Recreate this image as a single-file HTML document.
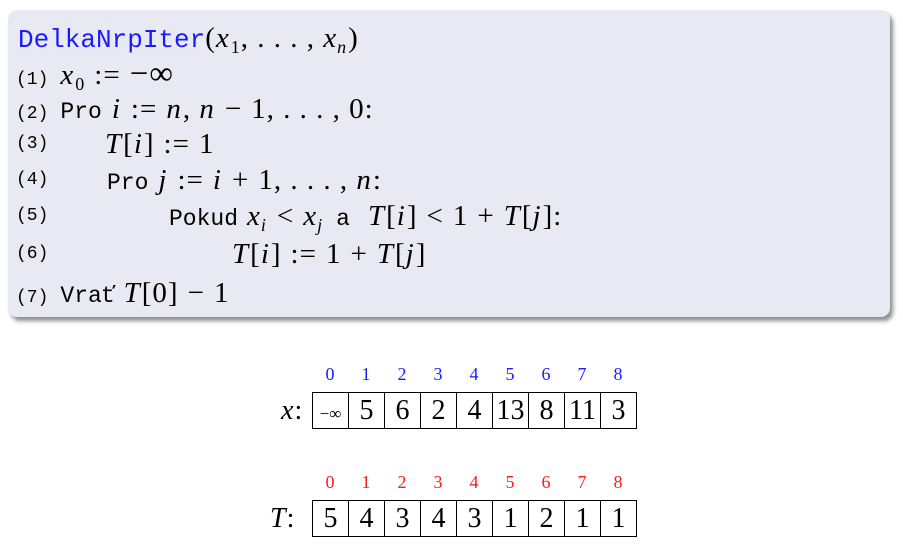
<!DOCTYPE html>
<html><head><meta charset="utf-8"><style>
body{margin:0;width:903px;height:550px;background:#fff;position:relative;overflow:hidden;font-family:"Liberation Serif",serif}
.box{position:absolute;left:8px;top:10px;width:882px;height:307px;background:#e9e9f4;border-radius:9px;box-shadow:3px 4px 4px rgba(0,0,0,0.45)}
.l{position:absolute;white-space:nowrap;height:36px;line-height:36px}
.n{font-family:"Liberation Mono",monospace;font-size:18px}
.m{font-family:"Liberation Mono",monospace;font-size:23px}
.s{font-family:"Liberation Serif",serif;font-size:29px;letter-spacing:1px}
.o{padding:0 9px}
.g{display:inline-block;width:10px}
i{font-style:italic;padding-right:1px}
sub{font-size:18px;vertical-align:-6px;line-height:0;font-style:normal}
i sub{font-style:italic}
.cell{position:absolute;width:37px;height:37px;border:1px solid #000;box-sizing:border-box;text-align:center;line-height:35px;font-size:28px}
.idx{position:absolute;width:36px;text-align:center;font-size:18px}
</style></head><body>
<div class="box"></div>
<div class="l" style="left:18px;top:20px"><span class="m" style="font-size:26px;color:#1a1aff">DelkaNrpIter</span><span class="s" style="letter-spacing:1px">(<i>x</i><sub>1</sub>, . . . , <i>x<sub>n</sub></i>)</span></div>
<div class="l" style="left:16px;top:56px"><span class="n">(1)</span><span class="g" style="width:12px"></span><span class="s"><i>x</i><sub>0</sub><span class="o">:=</span><span style="font-size:33px">−∞</span></span></div>
<div class="l" style="left:16px;top:91px"><span class="n">(2)</span><span class="g" style="width:12px"></span><span class="m">Pro</span><span class="g"></span><span class="s"><i>i</i><span class="o">:=</span><i>n</i>, <i>n</i><span class="o">−</span>1, . . . , 0:</span></div>
<div class="l" style="left:16px;top:126px"><span class="n">(3)</span></div>
<div class="l" style="left:105px;top:126px"><span class="s"><i>T</i>[<i>i</i>]<span class="o">:=</span>1</span></div>
<div class="l" style="left:16px;top:162px"><span class="n">(4)</span></div>
<div class="l" style="left:107px;top:162px"><span class="m">Pro</span><span class="g"></span><span class="s"><i>j</i><span class="o">:=</span><i>i</i><span class="o">+</span>1, . . . , <i>n</i>:</span></div>
<div class="l" style="left:16px;top:198px"><span class="n">(5)</span></div>
<div class="l" style="left:169px;top:198px"><span class="m">Pokud</span><span class="g" style="width:9px"></span><span class="s"><i>x<sub>i</sub></i><span class="o">&lt;</span><i>x<sub>j</sub></i></span><span class="g" style="width:12px"></span><span class="m">a</span><span class="g" style="width:18px"></span><span class="s"><i>T</i>[<i>i</i>]<span class="o">&lt;</span>1<span class="o">+</span><i>T</i>[<i>j</i>]:</span></div>
<div class="l" style="left:16px;top:236px"><span class="n">(6)</span></div>
<div class="l" style="left:232px;top:236px"><span class="s"><i>T</i>[<i>i</i>]<span class="o">:=</span>1<span class="o">+</span><i>T</i>[<i>j</i>]</span></div>
<div class="l" style="left:16px;top:275px"><span class="n">(7)</span><span class="g" style="width:12px"></span><span class="m">Vrať</span><span class="g" style="width:8px"></span><span class="s"><i>T</i>[0]<span class="o">−</span>1</span></div>

<div style="position:absolute;left:281px;top:392px;font-size:28px;line-height:37px"><i>x</i>:</div>
<div style="position:absolute;left:270px;top:500px;font-size:28px;line-height:37px"><i>T</i>:</div>
<div id="t"></div>
<script>
var xs=['<span style="font-size:17px">−∞</span>','5','6','2','4','13','8','11','3'];
var ts=['5','4','3','4','3','1','2','1','1'];
var h='';
for(var k=0;k<9;k++){var L=312+36*k;
h+='<div class="idx" style="left:'+L+'px;top:364px;color:#1a1aff">'+k+'</div>';
h+='<div class="cell" style="left:'+L+'px;top:392px">'+xs[k]+'</div>';
h+='<div class="idx" style="left:'+L+'px;top:472px;color:#ff1a1a">'+k+'</div>';
h+='<div class="cell" style="left:'+L+'px;top:500px">'+ts[k]+'</div>';}
document.getElementById('t').innerHTML=h;
</script>
</body></html>
